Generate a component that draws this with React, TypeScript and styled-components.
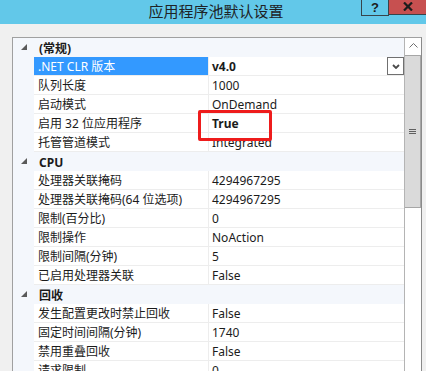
import React from 'react';
import styled, { createGlobalStyle } from 'styled-components';

type Item = {
  name: string;
  value: string;
  bold?: boolean;
  selected?: boolean;
  dropdown?: boolean;
};

type Section = { title: string; items: Item[] };

const sections: Section[] = [
  {
    title: '(常规)',
    items: [
      { name: '.NET CLR 版本', value: 'v4.0', bold: true, selected: true, dropdown: true },
      { name: '队列长度', value: '1000' },
      { name: '启动模式', value: 'OnDemand' },
      { name: '启用 32 位应用程序', value: 'True', bold: true },
      { name: '托管管道模式', value: 'Integrated' }
    ]
  },
  {
    title: 'CPU',
    items: [
      { name: '处理器关联掩码', value: '4294967295' },
      { name: '处理器关联掩码(64 位选项)', value: '4294967295' },
      { name: '限制(百分比)', value: '0' },
      { name: '限制操作', value: 'NoAction' },
      { name: '限制间隔(分钟)', value: '5' },
      { name: '已启用处理器关联', value: 'False' }
    ]
  },
  {
    title: '回收',
    items: [
      { name: '发生配置更改时禁止回收', value: 'False' },
      { name: '固定时间间隔(分钟)', value: '1740' },
      { name: '禁用重叠回收', value: 'False' },
      { name: '请求限制', value: '0' },
      { name: '生成回收事件日志条目', value: '' }
    ]
  }
];

const App = () => {
  return (
    <>
      <GlobalStyle />
      <Window>
        <TitleBar>
          <span />
          <Title>应用程序池默认设置</Title>
          <Controls>
            <HelpButton>?</HelpButton>
            <CloseButton>
              <svg width="10" height="9" viewBox="0 0 10 9">
                <path d="M1 0.5 L9 8.5 M9 0.5 L1 8.5" stroke="#1c1c1c" strokeWidth="2.2" />
              </svg>
            </CloseButton>
          </Controls>
        </TitleBar>

        <Body>
          <Grid>
            <List>
              {sections.map(section => (
                <React.Fragment key={section.title}>
                  <CategoryRow>
                    <Gutter>
                      <svg width="6" height="6" viewBox="0 0 6 6">
                        <polygon points="0,6 6,6 6,0" fill="#5a5a5a" />
                      </svg>
                    </Gutter>
                    <CategoryTitle>{section.title}</CategoryTitle>
                  </CategoryRow>
                  {section.items.map(item => (
                    <PropRow key={item.name}>
                      <Gutter />
                      <NameCell $selected={item.selected}>{item.name}</NameCell>
                      <ValueCell $bold={item.bold}>
                        <span>{item.value}</span>
                        {item.dropdown && (
                          <DropButton>
                            <svg width="8" height="5" viewBox="0 0 8 5">
                              <polyline points="1,1 4,4 7,1" stroke="#4a4a4a" strokeWidth="1.8" fill="none" />
                            </svg>
                          </DropButton>
                        )}
                      </ValueCell>
                    </PropRow>
                  ))}
                </React.Fragment>
              ))}
            </List>

            <ScrollBar>
              <ArrowButton>
                <svg width="9" height="5" viewBox="0 0 9 5">
                  <polyline points="0.5,4.5 4.5,0.5 8.5,4.5" stroke="#707070" fill="none" />
                </svg>
              </ArrowButton>
              <Thumb>
                <Grip />
                <Grip />
                <Grip />
              </Thumb>
            </ScrollBar>
          </Grid>
        </Body>

        <Highlight />
      </Window>
    </>
  );
};

export default App;

const GlobalStyle = createGlobalStyle`
  html, body {
    margin: 0;
    padding: 0;
    background: #f0f0f0;
  }
  body {
    font-family: "Noto Sans", "Noto Sans CJK SC", sans-serif;
    font-size: 12px;
    color: #1b1b1b;
  }
`;

const Window = styled.div`
  position: relative;
  width: 426px;
  height: 371px;
  overflow: hidden;
  display: flex;
  flex-direction: column;
  background: #f0f0f0;
`;

const TitleBar = styled.div`
  height: 24px;
  flex: none;
  display: grid;
  grid-template-columns: 1fr auto 1fr;
  background: #62c8e9;
`;

const Title = styled.div`
  font-family: "Noto Sans CJK SC", sans-serif;
  font-size: 15px;
  line-height: 21px;
  color: #1e2326;
  padding-left: 6px;
`;

const Controls = styled.div`
  justify-self: end;
  align-self: start;
  display: flex;
  height: 16px;
`;

const HelpButton = styled.div`
  width: 26px;
  height: 15px;
  border-left: 1px solid #37444b;
  border-bottom: 1px solid #37444b;
  border-right: 1px solid #37444b;
  display: flex;
  align-items: center;
  justify-content: center;
  font-family: "Liberation Sans", sans-serif;
  font-weight: bold;
  font-size: 13px;
  line-height: 13px;
  color: #1c1c1c;
`;

const CloseButton = styled.div`
  width: 37px;
  height: 15px;
  border-bottom: 1px solid #37444b;
  background: #c75050;
  display: flex;
  align-items: center;
  justify-content: center;
  padding-bottom: 2px;
  box-sizing: border-box;
`;

const Body = styled.div`
  flex: 1;
  padding: 13px 4px 0 12px;
  display: flex;
  min-height: 0;
`;

const Grid = styled.div`
  flex: 1;
  display: flex;
  border-top: 1px solid #a0a0a0;
  border-left: 1px solid #a0a0a0;
  border-right: 1px solid #8a8a8a;
  background: #fff;
  overflow: hidden;
`;

const List = styled.div`
  flex: 1;
  display: flex;
  flex-direction: column;
`;

const CategoryRow = styled.div`
  height: 19px;
  flex: none;
  display: grid;
  grid-template-columns: 21px 1fr;
  background: #f4f7fc;
`;

const Gutter = styled.div`
  background: #f4f7fc;
  display: flex;
  align-items: center;
  padding-left: 8px;
  padding-bottom: 1px;
`;

const CategoryTitle = styled.div`
  font-weight: bold;
  line-height: 17px;
  padding: 2px 0 0 5px;
  color: #1b1b1b;
`;

const PropRow = styled.div`
  height: 19px;
  flex: none;
  display: grid;
  grid-template-columns: 21px 175px 1fr;
`;

const NameCell = styled.div<{ $selected?: boolean }>`
  line-height: 16px;
  padding: 2px 0 0 4px;
  border-right: 1px solid #ededed;
  border-bottom: 1px solid #ededed;
  white-space: nowrap;
  overflow: hidden;
  background: ${({ $selected }) => ($selected ? '#3399ff' : '#fff')};
  color: ${({ $selected }) => ($selected ? '#fff' : '#1b1b1b')};
`;

const ValueCell = styled.div<{ $bold?: boolean }>`
  display: flex;
  align-items: flex-start;
  line-height: 16px;
  padding: 2px 0 0 3px;
  border-bottom: 1px solid #ededed;
  white-space: nowrap;
  font-weight: ${({ $bold }) => ($bold ? 'bold' : 'normal')};
`;

const DropButton = styled.div`
  margin: -2px 0 0 auto;
  width: 15px;
  height: 16px;
  border: 1px solid #707070;
  background: #fff;
  display: flex;
  align-items: center;
  justify-content: center;
`;

const ScrollBar = styled.div`
  width: 16px;
  flex: none;
  border-left: 1px solid #b4b4b4;
  display: flex;
  flex-direction: column;
  background: #fff;
`;

const ArrowButton = styled.div`
  height: 17px;
  display: flex;
  align-items: center;
  justify-content: center;
  padding-bottom: 2px;
  box-sizing: border-box;
`;

const Thumb = styled.div`
  height: 153px;
  box-sizing: border-box;
  border: 1px solid #a6a6a6;
  border-left: none;
  background: #dadada;
  display: flex;
  flex-direction: column;
  align-items: center;
  justify-content: center;
  gap: 1px;
`;

const Grip = styled.div`
  width: 7px;
  height: 1px;
  background: #606060;
`;

const Highlight = styled.div`
  position: absolute;
  left: 198px;
  top: 110px;
  width: 74px;
  height: 31px;
  box-sizing: border-box;
  border: 3px solid #ee1c1c;
  border-radius: 2px;
`;
